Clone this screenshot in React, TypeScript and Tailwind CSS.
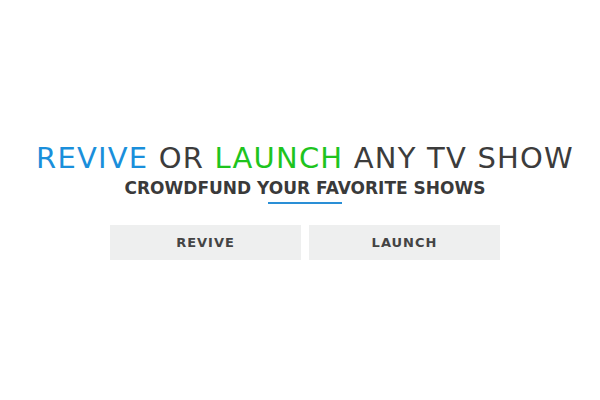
import React from "react";

const App = () => {
	return (
		<div
			className="w-full h-[400px] bg-white flex flex-col items-center pt-[141px] pl-[10px]"
			style={{ fontFamily: '"DejaVu Sans", sans-serif' }}
		>
			{/* Headline */}
			<h1 className="text-[29px] leading-[34px] text-[#3c3c3c] tracking-[1.2px] whitespace-nowrap">
				<span className="text-[#1a8fdb]">REVIVE</span> OR{" "}
				<span className="text-[#1ec41e]">LAUNCH</span> ANY TV SHOW
			</h1>
			<h2 className="mt-[3px] text-[17px] leading-[20px] text-[#3a3a3a] font-bold whitespace-nowrap">
				CROWDFUND YOUR FAVORITE SHOWS
			</h2>
			<div className="mt-[4px] w-[74px] h-[2px] bg-[#2a8fd6]" />

			{/* Actions */}
			<div className="mt-[21px] flex gap-[8px]">
				<button className="w-[191px] h-[35px] bg-[#eeefef] text-[13px] font-bold tracking-[1px] text-[#444]">
					REVIVE
				</button>
				<button className="w-[191px] h-[35px] bg-[#eeefef] text-[13px] font-bold tracking-[1px] text-[#444]">
					LAUNCH
				</button>
			</div>
		</div>
	);
};

export default App;
